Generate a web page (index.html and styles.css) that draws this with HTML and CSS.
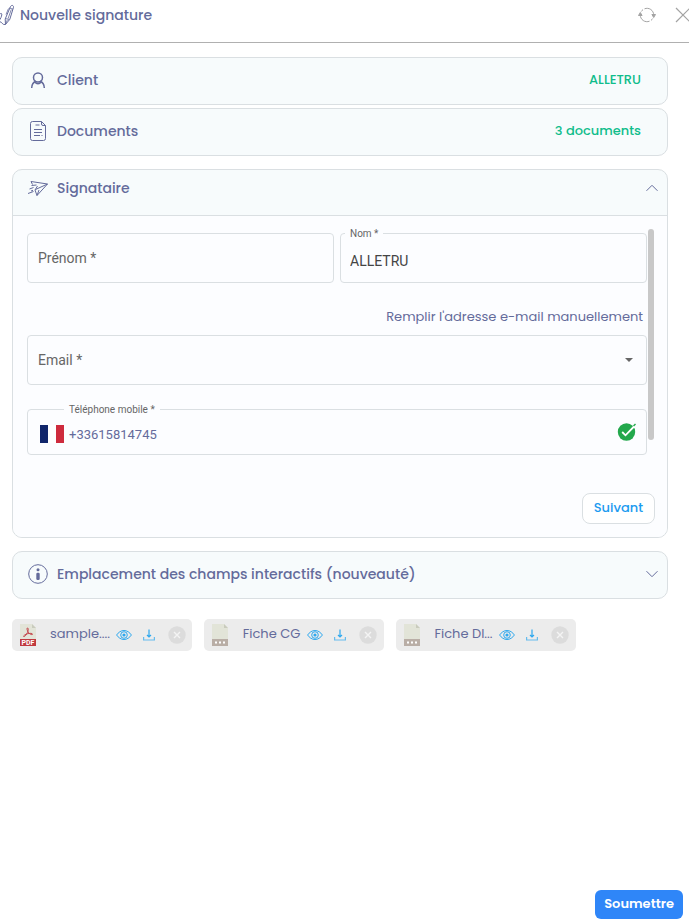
FILE: index.html
```html
<!DOCTYPE html>
<html lang="fr">
<head>
  <meta charset="UTF-8" />
  <meta name="viewport" content="width=device-width, initial-scale=1.0" />
  <title>Nouvelle signature</title>
  <link rel="stylesheet" href="styles.css">
</head>
<body>
  <!-- Icônes communes -->
  <svg class="sprite" aria-hidden="true">
    <symbol id="icon-eye" viewBox="0 0 16 12">
      <path d="M.6 6C2.4 3.300 5 1.500 8 1.500S13.600 3.300 15.400 6C13.600 8.700 11 10.500 8 10.500S2.400 8.700.6 6z" fill="none" stroke="currentColor" />
      <circle cx="8" cy="6" r="3.300" fill="none" stroke="currentColor" />
      <circle cx="8" cy="6" r="1.600" fill="currentColor" />
    </symbol>
    <symbol id="icon-download" viewBox="0 0 12 12">
      <path d="M6 .5V8M4 6l2 2 2-2" fill="none" stroke="currentColor" stroke-width="1.200" />
      <path d="M.6 8v3h10.800V8" fill="none" stroke="currentColor" stroke-width="1.200" opacity=".7" />
    </symbol>
    <symbol id="icon-remove" viewBox="0 0 18 18">
      <circle cx="9" cy="9" r="8.700" fill="#dcdcdc" />
      <path d="M6 6l6 6M12 6l-6 6" stroke="#f4f4f4" stroke-width="1.400" />
    </symbol>
    <symbol id="icon-file" viewBox="0 0 16 22">
      <path d="M0 0h12l4 4v12H0z" fill="#e2e4d8" />
      <path d="M12 0l4 4h-4z" fill="#c9cbbd" />
      <path d="M0 15h16v7H0z" fill="#b9aea6" />
      <path d="M3 17.500h2v2H3zM7 17.500h2v2H7zM11 17.500h2v2h-2z" fill="#fff" />
    </symbol>
  </svg>

  <header class="header">
    <svg class="header-icon" viewBox="0 0 24 22" fill="none" stroke="currentColor" aria-hidden="true">
      <path d="M20.500 2.500c1.200-1.800 3.300-1.200 3 .8l-3.700 12-4.300 5.200-.3-5.500z" />
      <path d="M19.500 4l3.500 1.200M15.500 14.500l4 1.200M21.300 5.500l-3.300 9.200M15.500 20.500l1.800-4.500M18.500 4.500l-2.500 6" stroke-width=".8" />
      <path d="M5 19c3-1 5-3 6-5.500s1.200-4.500-.3-4-3.200 4.500-1.700 7 2 1 3 2.500 1.500 1.500 3 1.500" />
    </svg>
    <h1>Nouvelle signature</h1>
    <button class="btn-icon" type="button" aria-label="Actualiser">
      <svg width="18" height="16" viewBox="0 0 18 16" fill="none" stroke="currentColor">
        <path d="M3.300 4.500A6.700 6.700 0 0 1 5 2.600M6.500 1.800a6.700 6.700 0 0 1 9.200 6.200M14.700 11.500a6.700 6.700 0 0 1-1.700 1.900M11.500 14.200A6.700 6.700 0 0 1 2.300 8" />
        <path d="M.5 8.500l1.800-3 1.800 3zM13.900 7.500l1.800 3 1.800-3z" fill="currentColor" />
      </svg>
    </button>
    <button class="btn-icon btn-close" type="button" aria-label="Fermer">
      <svg width="16" height="16" viewBox="0 0 16 16" stroke="currentColor" stroke-width="1.200">
        <path d="M1 1l14 14M15 1L1 15" />
      </svg>
    </button>
  </header>

  <main class="content">
    <section class="panel">
      <div class="panel-header">
        <svg class="panel-icon" viewBox="0 0 22 22" fill="none" stroke="currentColor" stroke-width="1.500" aria-hidden="true">
          <circle cx="11" cy="8.500" r="4.500" />
          <path d="M4.700 19c0-3.500 1.500-5.800 4.300-6.800M17.300 19c0-3.500-1.500-5.800-4.300-6.800M8 13c1.500 2.300 4.500 2.300 6 0" />
        </svg>
        <h2>Client</h2>
        <span class="panel-value">ALLETRU</span>
      </div>
    </section>

    <section class="panel">
      <div class="panel-header">
        <svg class="panel-icon" viewBox="0 0 22 22" fill="none" stroke="currentColor" aria-hidden="true">
          <path d="M14.500 1.500H5.500a2 2 0 0 0-2 2v15a2 2 0 0 0 2 2h11a2 2 0 0 0 2-2V5.500z" />
          <path d="M14.500 1.500V4a1.500 1.500 0 0 0 1.500 1.500h2.500M8.500 5h4M7 9.500h8M7 12.500h8M7 15.500h6M14.500 15.500h1" />
        </svg>
        <h2>Documents</h2>
        <span class="panel-value">3 documents</span>
      </div>
    </section>

    <section class="panel panel-open">
      <div class="panel-header">
        <svg class="panel-icon" viewBox="0 0 22 22" fill="none" stroke="currentColor" stroke-linejoin="round" aria-hidden="true">
          <path d="M5.500 7.500L4 4.500 20.500 7 10 18.500 8 13l2.500-4" />
          <path d="M20.500 7L8.500 12.500M10 18.500l2-5.500M4.500 8.500l5-.5M2.500 12l4-1.500M1 16.500l5.500-2M4 14l2-.7" />
        </svg>
        <h2>Signataire</h2>
        <button class="btn-toggle" type="button" aria-label="Replier" aria-expanded="true">
          <svg width="12" height="8" viewBox="0 0 12 8" fill="none" stroke="currentColor"><path d="M.5 6.800L6 1.300l5.500 5.500" /></svg>
        </button>
      </div>

      <form class="panel-body">
        <div class="scroll-area">
          <div class="form-row">
            <div class="field">
              <label for="prenom">Prénom *</label>
              <input type="text" id="prenom" />
            </div>
            <div class="field field-filled">
              <label for="nom">Nom *</label>
              <input type="text" id="nom" value="ALLETRU" />
            </div>
          </div>

          <a class="manual-link" href="#email">Remplir l'adresse e-mail manuellement</a>

          <div class="field">
            <label for="email">Email *</label>
            <select id="email">
              <option value=""></option>
            </select>
            <svg class="arrow" width="8" height="4" viewBox="0 0 8 4" aria-hidden="true"><path d="M0 0h8L4 4z" fill="currentColor" /></svg>
          </div>

          <div class="field field-filled field-phone">
            <label for="telephone">Téléphone mobile *</label>
            <svg class="flag" width="24" height="18" viewBox="0 0 24 18" aria-hidden="true">
              <path d="M0 0h8v18H0z" fill="#10266b" />
              <path d="M8 0h8v18H8z" fill="#fff" />
              <path d="M16 0h8v18h-8z" fill="#ce2b3d" />
            </svg>
            <input type="tel" id="telephone" value="+33615814745" />
            <svg class="valid" width="20" height="20" viewBox="0 0 20 20" aria-hidden="true">
              <circle cx="9.500" cy="10" r="8.700" fill="#23a84c" />
              <path d="M5.200 10l3.300 3.300 9-9.300" fill="none" stroke="#fff" stroke-width="1.800" />
              <path d="M16.500 4l2-2" stroke="#23a84c" stroke-width="1.500" />
            </svg>
          </div>
          <span class="scroll-thumb"></span>
        </div>
        <button class="btn btn-next" type="button">Suivant</button>
      </form>
    </section>

    <section class="panel">
      <div class="panel-header">
        <svg class="panel-icon" viewBox="0 0 22 22" fill="none" stroke="currentColor" aria-hidden="true">
          <circle cx="11" cy="11" r="9.300" />
          <circle cx="11" cy="6.800" r="1.500" fill="currentColor" stroke="none" />
          <rect x="9.300" y="9.800" width="3.400" height="7.200" rx="1.200" fill="currentColor" stroke="none" />
        </svg>
        <h2>Emplacement des champs interactifs (nouveauté)</h2>
        <button class="btn-toggle" type="button" aria-label="Déplier" aria-expanded="false">
          <svg width="12" height="8" viewBox="0 0 12 8" fill="none" stroke="currentColor"><path d="M.5 1.200L6 6.700l5.500-5.500" /></svg>
        </button>
      </div>
    </section>

    <ul class="files">
      <li class="file">
        <svg class="file-icon" viewBox="0 0 16 22" aria-hidden="true">
          <path d="M0 0h12l4 4v12H0z" fill="#e2e4d8" />
          <path d="M12 0l4 4h-4z" fill="#c9cbbd" />
          <path d="M7.500 4c1.300 0 .8 2.800-.3 5S4.500 13 3.700 12.500s1.500-2.200 4-2.800 5-.4 4.800.5-2.500.2-3.800-1.400S6.300 4 7.500 4z" fill="none" stroke="#c0393f" stroke-width=".9" />
          <path d="M0 15h16v7H0z" fill="#c0393f" />
          <text class="pdf" x="8" y="21">PDF</text>
        </svg>
        <span class="file-name">sample....</span>
        <button class="btn-file" type="button" aria-label="Voir"><svg width="16" height="12"><use href="#icon-eye" /></svg></button>
        <button class="btn-file" type="button" aria-label="Télécharger"><svg width="12" height="12"><use href="#icon-download" /></svg></button>
        <button class="btn-file btn-remove" type="button" aria-label="Supprimer"><svg width="18" height="18"><use href="#icon-remove" /></svg></button>
      </li>
      <li class="file">
        <svg class="file-icon" aria-hidden="true"><use href="#icon-file" /></svg>
        <span class="file-name">Fiche CG</span>
        <button class="btn-file" type="button" aria-label="Voir"><svg width="16" height="12"><use href="#icon-eye" /></svg></button>
        <button class="btn-file" type="button" aria-label="Télécharger"><svg width="12" height="12"><use href="#icon-download" /></svg></button>
        <button class="btn-file btn-remove" type="button" aria-label="Supprimer"><svg width="18" height="18"><use href="#icon-remove" /></svg></button>
      </li>
      <li class="file">
        <svg class="file-icon" aria-hidden="true"><use href="#icon-file" /></svg>
        <span class="file-name">Fiche DI...</span>
        <button class="btn-file" type="button" aria-label="Voir"><svg width="16" height="12"><use href="#icon-eye" /></svg></button>
        <button class="btn-file" type="button" aria-label="Télécharger"><svg width="12" height="12"><use href="#icon-download" /></svg></button>
        <button class="btn-file btn-remove" type="button" aria-label="Supprimer"><svg width="18" height="18"><use href="#icon-remove" /></svg></button>
      </li>
    </ul>
  </main>

  <footer class="footer">
    <button class="btn btn-submit" type="submit">Soumettre</button>
  </footer>
</body>
</html>
```
FILE: styles.css
```css
:root {
  --text-color: #646b9b;
  --border-color: #dadfe2;
  --green: #10bd8b;
  --blue: #1d9bf0;
  --font-title: Poppins, Inter, sans-serif;
  --font-field: Roboto, sans-serif;
}

* {
  box-sizing: border-box;
}

body {
  margin: 0;
  min-height: 100vh;
  display: flex;
  flex-direction: column;
  background: #fff;
  color: var(--text-color);
  font-family: var(--font-title);
  font-size: 13px;
}

h1, h2 {
  margin: 0;
  font-size: 14px;
  line-height: 20px;
  font-weight: 500;
}

button {
  font-family: inherit;
  color: inherit;
  cursor: pointer;
}

svg {
  display: block;
  flex-shrink: 0;
}

.sprite {
  position: absolute;
  width: 0;
  height: 0;
}

/* En-tête */
.header {
  display: flex;
  align-items: center;
  height: 43px;
  padding-bottom: 12px;
  border-bottom: 1px solid #b0b0b0;
  overflow: hidden;
}

.header-icon {
  width: 24px;
  height: 22px;
  margin-left: -10px;
}

.header h1 {
  flex: 1;
  margin-left: 6px;
}

.btn-icon {
  padding: 0;
  border: none;
  background: none;
  color: #a3a3a3;
}

.btn-close {
  margin-left: 19px;
  margin-right: -2px;
}

/* Panneaux */
.content {
  flex: 1;
  display: flex;
  flex-direction: column;
  gap: 3px;
  padding: 14px 21px 14px 12px;
}

.panel {
  border: 1px solid var(--border-color);
  border-radius: 10px;
  background: #f7fbfc;
  overflow: hidden;
}

.panel-header {
  display: flex;
  align-items: center;
  height: 46px;
  padding: 0 9px 2px 14px;
}

.panel-icon {
  width: 22px;
  height: 22px;
  margin-right: 8px;
}

.panel h2 {
  flex: 1;
}

.panel-value {
  margin-right: 17px;
  color: var(--green);
  font-weight: 500;
}

.btn-toggle {
  padding: 0;
  border: none;
  background: none;
}

.panel-open {
  margin: 10px 0;
}

.panel-open .panel-header {
  padding-bottom: 10px;
  border-bottom: 1px solid var(--border-color);
}

.panel-body {
  padding: 13px 12px 13px 14px;
  background: #fcfdff;
}

.scroll-area {
  position: relative;
  display: flex;
  flex-direction: column;
  padding: 4px 8px 24px 0;
}

.scroll-thumb {
  position: absolute;
  top: 0;
  right: 1px;
  width: 6px;
  height: 211px;
  border-radius: 3px;
  background: #c8c8c8;
}

/* Champs */
.form-row {
  display: grid;
  grid-template-columns: 1fr 1fr;
  gap: 6px;
}

.field {
  position: relative;
  display: flex;
  align-items: center;
  height: 50px;
  border: 1px solid var(--border-color);
  border-radius: 4px;
  color: #666;
  font-family: var(--font-field);
  font-size: 14px;
}

.field label {
  position: absolute;
  left: 10px;
  line-height: 20px;
  pointer-events: none;
}

.field-filled label {
  top: -6px;
  left: 4px;
  padding: 0 5px;
  background: #fcfdff;
  font-size: 10px;
  line-height: 12px;
}

.field input,
.field select {
  flex: 1;
  min-width: 0;
  height: 100%;
  padding: 6px 9px 0;
  border: none;
  outline: none;
  background: none;
  color: #444;
  font: 14px var(--font-field);
  appearance: none;
}

.arrow {
  position: absolute;
  right: 13px;
  pointer-events: none;
}

.manual-link {
  align-self: flex-end;
  margin: 24px 4px 8px 0;
  color: inherit;
  line-height: 20px;
  text-decoration: none;
}

.field-phone {
  height: 46px;
  margin-top: 24px;
  padding: 0 9px 0 12px;
}

.field-phone label {
  left: 36px;
}

.field-phone input {
  padding: 4px 5px 0;
  color: var(--text-color);
  font-size: 13px;
}

.flag {
  margin-top: 3px;
}

/* Boutons */
.btn {
  display: block;
  border-radius: 8px;
  font-size: 13px;
  line-height: 20px;
}

.btn-next {
  margin: 14px 0 0 auto;
  padding: 4px 11px 5px;
  border: 1px solid var(--border-color);
  background: #fff;
  color: var(--blue);
  font-weight: 500;
}

.btn-submit {
  padding: 4px 9px 5px;
  border: none;
  border-radius: 6px;
  background: #2f86f8;
  color: #fff;
  font-weight: 600;
}

/* Fichiers */
.files {
  display: flex;
  flex-wrap: wrap;
  gap: 12px;
  margin: 17px 0 0;
  padding: 0;
  list-style: none;
}

.file {
  display: flex;
  align-items: center;
  width: 180px;
  height: 32px;
  padding: 0 7px 0 8px;
  border-radius: 5px;
  background: #ececec;
}

.file-icon {
  width: 16px;
  height: 22px;
  margin-right: 14px;
}

.file-name {
  flex: 1;
  padding-bottom: 2px;
  white-space: nowrap;
  text-align: center;
}

.pdf {
  fill: #fff;
  font: bold 7px var(--font-field);
  text-anchor: middle;
}

.btn-file {
  margin-left: 6px;
  padding: 0;
  border: none;
  background: none;
  color: #2ea8ee;
}

.btn-file + .btn-file {
  margin-left: 11px;
}

.btn-file + .btn-remove {
  margin-left: 13px;
}

.footer {
  display: flex;
  justify-content: flex-end;
  padding: 0 6px 4px;
}
```
